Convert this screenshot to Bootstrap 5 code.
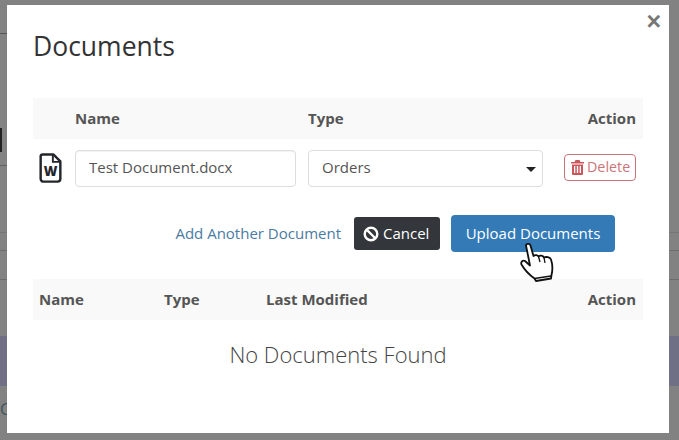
<!DOCTYPE html>
<html lang="en">
<head>
  <meta charset="UTF-8">
  <meta name="viewport" content="width=device-width, initial-scale=1.0">
  <title>Documents</title>

  <link href="https://cdn.jsdelivr.net/npm/bootstrap@5.3.3/dist/css/bootstrap.min.css" rel="stylesheet">

  <style>
    html, body { height: 100%; }
    body { margin: 0; overflow: hidden; background: #828282; font-family: "Open Sans", "Liberation Sans", sans-serif; color: #555; font-size: 15px; }
    .page-behind { position: absolute; inset: 0; }
    .page-behind div { position: absolute; }
    .line-a { left: 0; width: 8px; top: 33px; height: 1px; background: #555; }
    .line-b { left: 0; width: 8px; top: 165px; height: 1px; background: #606060; }
    .blob { left: 0; width: 2px; top: 128px; height: 24px; background: #222; }
    .band-l { left: 0; width: 8px; top: 336px; height: 50px; background: #6f6f86; }
    .band-r { left: 669px; right: 0; top: 336px; height: 50px; background: #6f6f86; }
    .line-c { left: 669px; right: 0; top: 232px; height: 19px; border-top: 1px solid #757575; border-bottom: 1px solid #6c6c6c; }
    .line-d { left: 0; width: 8px; top: 232px; height: 19px; border-top: 1px solid #757575; border-bottom: 1px solid #6c6c6c; }
    .line-e { left: 669px; right: 0; top: 279px; height: 1px; background: #6c6c6c; }
    .line-f { left: 0; width: 8px; top: 279px; height: 1px; background: #6c6c6c; }
    .edge-c { left: 0; top: 399px; color: #3e5560; font-size: 16px; line-height: 20px; }

    .doc-shell { position: relative; height: 100%; padding: 5px 10px 7px 7px; }
    .doc-modal { position: relative; height: 100%; background: #fff; border: 0; border-radius: 0; padding: 0 26px; }
    .doc-close { position: absolute; top: 2px; right: 8px; border: 0; background: none; padding: 0; color: #777; font-size: 25px; font-weight: 700; line-height: 28px; font-family: "Liberation Sans", sans-serif; }
    .doc-title { margin: 0; padding-top: 23px; height: 93px; font-size: 26.500px; font-weight: 400; line-height: 36px; color: #333; }

    .doc-table { table-layout: fixed; width: 610px; margin: 0; color: #555; }
    .doc-table th, .doc-table td { border: 0; box-shadow: none; background: none; vertical-align: middle; padding: 0 6px; }
    .doc-table th:last-child, .doc-table td:last-child { padding-right: 7px; }
    .doc-table thead th { background: #f9f9f9; height: 41px; font-size: 15px; font-weight: 700; color: #555; }
    .doc-table tbody td { height: 58px; }
    .doc-input { height: 37px; border: 1px solid #ddd; border-radius: 4px; padding: 0 13px 2px; font-size: 15px; color: #555; box-shadow: inset 0 1px 1px rgba(0,0,0,.05); }
    .doc-select { height: 37px; border: 1px solid #ddd; border-radius: 4px; padding: 0 13px 2px; font-size: 15px; color: #555; background-image: none; }
    .select-wrap { position: relative; }
    .select-wrap::after { content: ""; position: absolute; right: 7px; top: 17px; border: 5px solid transparent; border-top-color: #222; border-bottom: 0; }
    .file-icon { display: block; width: 23px; height: 30px; }
    .btn-doc-delete { display: inline-flex; align-items: center; gap: 3px; height: 27px; width: 72px; padding: 0 0 0 6px; margin-bottom: 2px; border: 1px solid #c9757a; border-radius: 4px; color: #c9757a; background: #fff; font-size: 14.300px; }

    .doc-actions { height: 89px; width: 610px; margin-top: -7px; padding: 0 28px 2px 0; }
    .doc-link { color: #4a7ba3; text-decoration: none; font-size: 15px; margin-right: 13px; }
    .btn-doc-cancel { display: inline-flex; align-items: center; gap: 4px; height: 33px; width: 86px; padding: 0 0 0 9px; background: #33363b; color: #fff; border: 0; border-radius: 3px; font-size: 15px; margin-right: 11px; }
    .btn-doc-upload { height: 37px; width: 164px; padding: 0; background: #337ab7; color: #fff; border: 0; border-radius: 4px; font-size: 15px; }
    .doc-empty { margin: 0; padding-top: 20px; text-align: center; font-size: 22px; font-weight: 300; line-height: 28px; color: #444; width: 610px; }
    .hand { position: absolute; left: 509px; top: 233px; width: 42px; height: 46px; }
  </style>
</head>
<body>

<!-- page behind the dialog -->
<div class="page-behind">
  <div class="line-a"></div>
  <div class="line-b"></div>
  <div class="blob"></div>
  <div class="line-d"></div>
  <div class="line-f"></div>
  <div class="band-l"></div>
  <div class="edge-c">C</div>
  <div class="line-c"></div>
  <div class="line-e"></div>
  <div class="band-r"></div>
</div>

<div class="doc-shell">
  <div class="doc-modal">
    <button type="button" class="doc-close" aria-label="Close">×</button>
    <h4 class="doc-title">Documents</h4>

    <table class="table doc-table">
      <colgroup><col style="width:36px"><col style="width:233px"><col style="width:247px"><col></colgroup>
      <thead>
        <tr><th></th><th>Name</th><th>Type</th><th class="text-end">Action</th></tr>
      </thead>
      <tbody>
        <tr>
          <td>
            <svg class="file-icon" viewBox="0 0 24 32">
              <path d="M3.5 1.5H15L22.5 9V27.5a3 3 0 0 1-3 3H4.500a3 3 0 0 1-3-3V3.500a2 2 0 0 1 2-2z" fill="#fff" stroke="#23262b" stroke-width="2.600" stroke-linejoin="round"/>
              <path d="M14.500 2V9.500H22" fill="none" stroke="#23262b" stroke-width="2"/>
              <text x="12" y="25" text-anchor="middle" font-family="Open Sans" font-weight="800" font-size="14" fill="#23262b">W</text>
            </svg>
          </td>
          <td><input type="text" class="form-control doc-input" value="Test Document.docx"></td>
          <td>
            <div class="select-wrap">
              <select class="form-select doc-select"><option>Orders</option></select>
            </div>
          </td>
          <td class="text-end">
            <button type="button" class="btn btn-doc-delete">
              <svg width="13" height="15" viewBox="0 0 13 15"><path fill="#c9565b" d="M4.500 0h4l1 2H13v1.500H0V2h3.500zM1 4.500h11V14a1 1 0 0 1-1 1H2a1 1 0 0 1-1-1zM3 6v7h1.300V6zm2.800 0v7h1.400V6zM8.700 6v7H10V6z" fill-rule="evenodd"/></svg>
              Delete
            </button>
          </td>
        </tr>
      </tbody>
    </table>

    <div class="doc-actions d-flex align-items-center justify-content-end">
      <a href="#" class="doc-link">Add Another Document</a>
      <button type="button" class="btn btn-doc-cancel">
        <svg width="16" height="16" viewBox="0 0 16 16"><circle cx="8" cy="8" r="6.300" fill="none" stroke="#fff" stroke-width="2.400"/><path d="M3.500 3.500l9 9" stroke="#fff" stroke-width="2.400"/></svg>
        Cancel
      </button>
      <button type="button" class="btn btn-doc-upload">Upload Documents</button>
    </div>

    <table class="table doc-table">
      <colgroup><col style="width:125px"><col style="width:102px"><col style="width:220px"><col></colgroup>
      <thead>
        <tr><th>Name</th><th>Type</th><th>Last Modified</th><th class="text-end">Action</th></tr>
      </thead>
    </table>
    <p class="doc-empty">No Documents Found</p>

    <svg class="hand" viewBox="0 0 42 46">
      <path d="M10 7.500C10 5.500 14 5 14.500 7.500L17.500 18C19 16.500 21.500 17 22.500 18.500C24 17 27 17.500 28 19.500C30 18.500 34 19 35 21.500C36.500 26 37 31 35.500 37L35 40.500L20 43L18.500 40.500C15 38 9.500 33.500 5.500 26.500C4.500 24.500 6.500 21.500 9 23L14 27.500Z" fill="#fff" stroke="#111" stroke-width="1.800" stroke-linejoin="round"/>
      <path d="M22.500 18.500L24 24M28 19.500L29 25M18.500 40.500L35 38" fill="none" stroke="#111" stroke-width="1.300"/>
    </svg>
  </div>
</div>

<script src="https://cdn.jsdelivr.net/npm/bootstrap@5.3.3/dist/js/bootstrap.bundle.min.js"></script>
</body>
</html>
